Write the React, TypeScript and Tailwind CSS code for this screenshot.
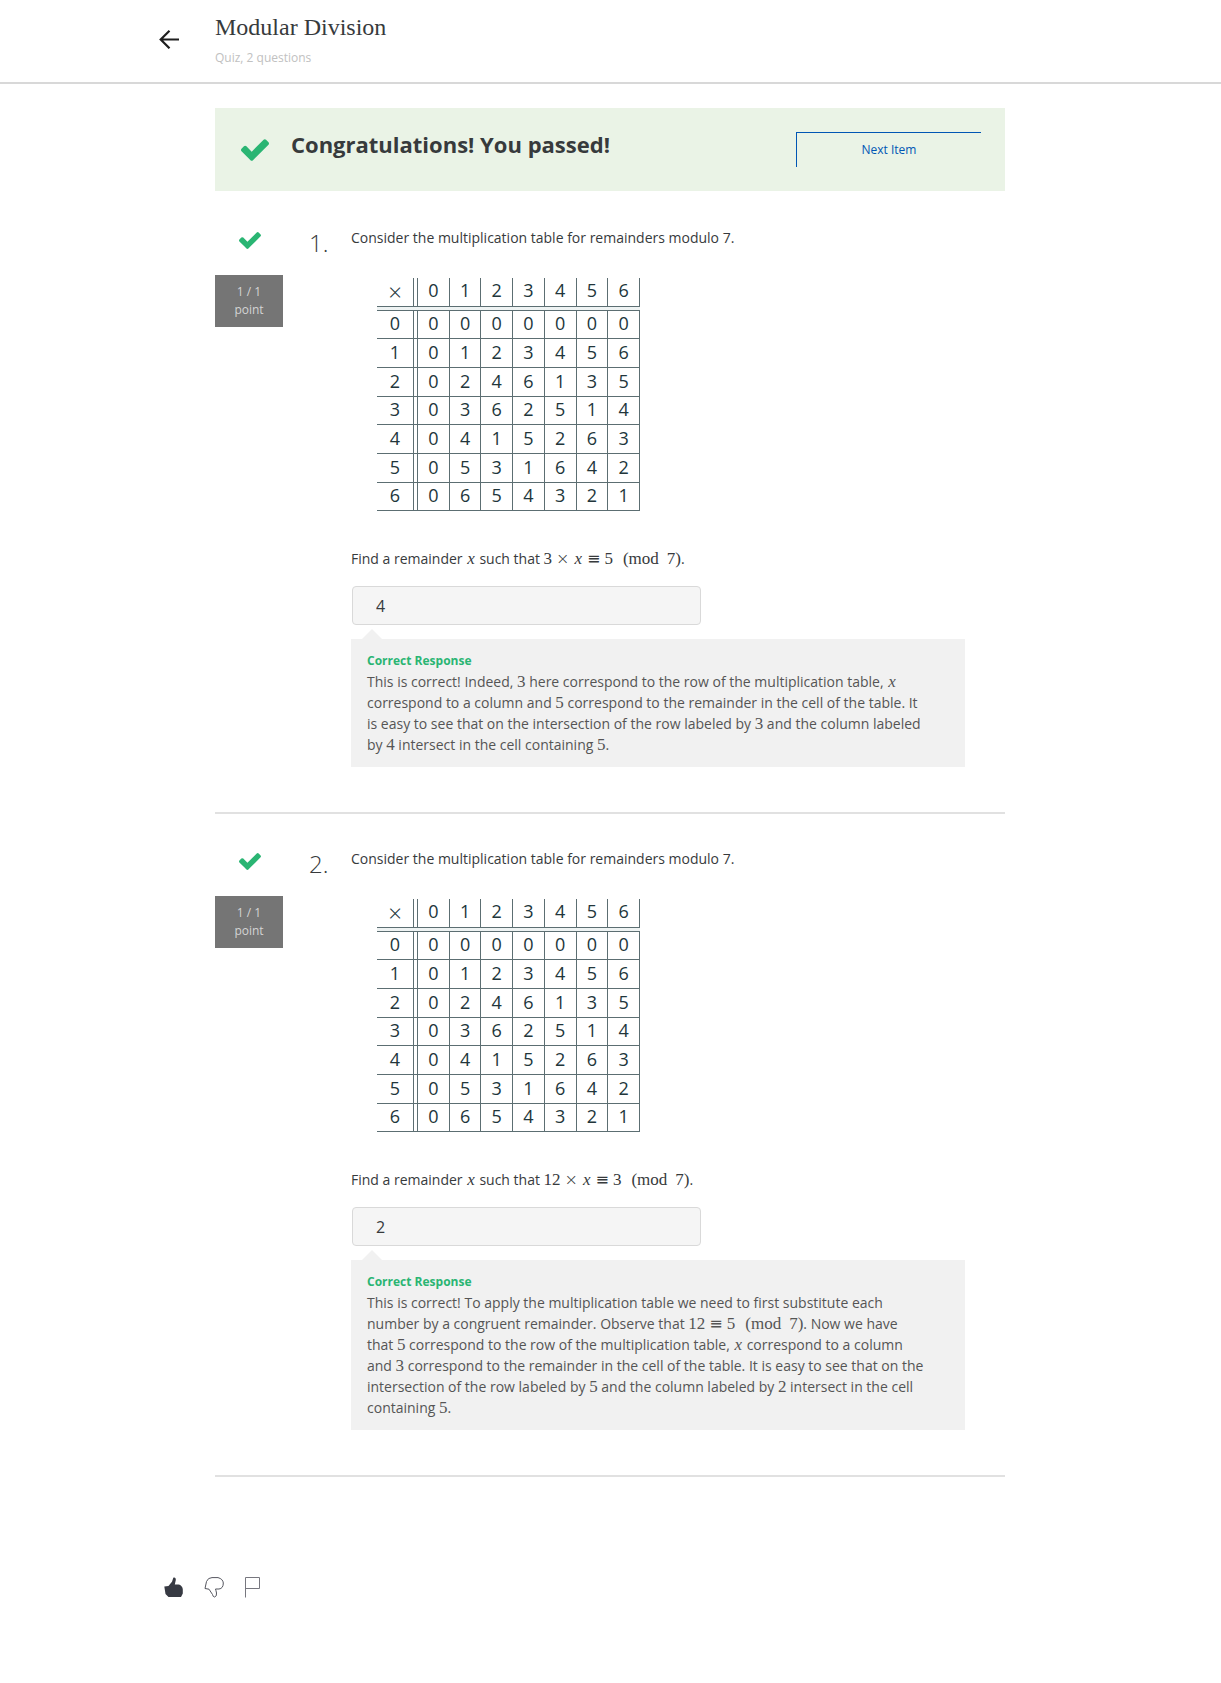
import React, { useState } from "react";

const DIGITS = [0, 1, 2, 3, 4, 5, 6];

function Check({ className }: { className: string }) {
  return (
    <svg viewBox="121 334 1550 1188" className={className} fill="#2ab573" aria-hidden="true">
      <path d="M1671 566q0 40-28 68l-724 724-136 136q-28 28-68 28t-68-28l-136-136-362-362q-28-28-28-68t28-68l136-136q28-28 68-28t68 28l294 295 656-657q28-28 68-28t68 28l136 136q28 28 28 68z" />
    </svg>
  );
}

function M({ children }: { children: React.ReactNode }) {
  return (
    <span className="font-['Liberation_Serif',serif] text-[17px] leading-none whitespace-nowrap">
      {children}
    </span>
  );
}

function X() {
  return <i className="px-px font-['Liberation_Serif',serif] text-[17px] leading-none">x</i>;
}

function Times() {
  return <span className="mx-1 font-['DejaVu_Sans',sans-serif] text-[16px] leading-none font-extralight">×</span>;
}

function Equiv() {
  return <span className="mx-1 font-['DejaVu_Sans',sans-serif] text-[16px] leading-none font-normal">≡</span>;
}

function Mod() {
  return (
    <>
      <span className="ml-2.5">(</span>mod<span className="ml-2">7)</span>
    </>
  );
}

function MultiplicationTable() {
  return (
    <table
      aria-label="Multiplication table modulo 7"
      className="ml-[26px] w-[263px] table-fixed border-separate border-spacing-0 text-center text-[18px] leading-[24px] text-[#22363b]"
    >
      <colgroup>
        <col className="w-[37px]" />
        <col className="w-1" />
        {DIGITS.map((d) => (
          <col key={d} />
        ))}
      </colgroup>
      <thead>
        <tr className="h-[29px]">
          <th className="border-r border-b border-[#5c6e72] p-0 text-[24px] font-light">×</th>
          <td className="border-r border-b border-[#5c6e72] p-0" />
          {DIGITS.map((d) => (
            <th key={d} className="border-r border-b border-[#5c6e72] p-0 pb-1 font-normal">
              {d}
            </th>
          ))}
        </tr>
        <tr className="h-1">
          <td colSpan={9} className="border-b border-[#5c6e72] bg-[#eef3f3] p-0" />
        </tr>
      </thead>
      <tbody>
        {DIGITS.map((r) => (
          <tr key={r} className={r % 3 === 0 ? "h-7" : "h-[29px]"}>
            <th className="border-r border-b border-[#5c6e72] p-0 pb-[3px] font-normal">{r}</th>
            <td className="border-r border-b border-[#5c6e72] p-0" />
            {DIGITS.map((c) => (
              <td key={c} className="border-r border-b border-[#5c6e72] p-0 pb-[3px]">
                {(r * c) % 7}
              </td>
            ))}
          </tr>
        ))}
      </tbody>
    </table>
  );
}

type QuestionProps = {
  number: number;
  answer: string;
  prompt: React.ReactNode;
  children: React.ReactNode;
};

function Question({ number, answer, prompt, children }: QuestionProps) {
  const [value, setValue] = useState(answer);
  const id = `answer-${number}`;
  return (
    <section className="flex border-b-2 border-[#e1e1e1] pb-[45px]">
      <div className="w-[68px] shrink-0 pt-[39px]">
        <Check className="ml-6 h-[17px] w-[22px]" />
        <div className="mt-[26px] bg-[#757575] py-2 text-center text-xs leading-[18px] text-[#d4d4d4]">
          1 / 1<br />
          point
        </div>
      </div>
      <div className="w-[68px] shrink-0 pt-[34px] pl-[26px] text-[24px] leading-[32px] font-light text-[#373a3c]">
        {number}.
      </div>
      <div className="min-w-0 flex-1 pt-[35px] pr-10">
        <p className="text-sm leading-5">Consider the multiplication table for remainders modulo 7.</p>
        <div className="mt-[30px]">
          <MultiplicationTable />
        </div>
        <p className="mt-[37px] text-sm leading-[21px]">
          <label htmlFor={id}>{prompt}</label>
        </p>
        <input
          id={id}
          type="text"
          value={value}
          onChange={(e) => setValue(e.target.value)}
          className="mt-[17px] ml-px block h-[39px] w-[349px] rounded border border-[#d9d9d9] bg-[#f5f5f5] px-[23px] text-base"
        />
        <svg viewBox="0 0 20 10" className="mt-1 ml-[11px] h-[10px] w-5" fill="#f1f1f1" aria-hidden="true">
          <path d="M0 10 10 0l10 10z" />
        </svg>
        <div className="bg-[#f1f1f1] py-3 pr-10 pl-4">
          <h3 className="text-xs leading-5 font-bold text-[#2ab573]">Correct Response</h3>
          <p className="text-sm leading-[21px] text-[#555]">{children}</p>
        </div>
      </div>
    </section>
  );
}

export default function App() {
  return (
    <div className="min-h-screen bg-white pb-[85px] font-['Open_Sans',sans-serif] text-[#373a3c]">
      <header className="border-b-2 border-[#d8d8d8]">
        <div className="mx-auto flex h-[82px] max-w-[903px]">
          <button type="button" aria-label="Back" className="mt-[29px] h-5 w-5">
            <svg viewBox="0 0 20 20" className="h-5 w-5" fill="none" stroke="#1f1f1f" strokeWidth="2.2">
              <path d="M20 10.500H2M10.500 1.700 1.700 10.500l8.800 8.800" />
            </svg>
          </button>
          <div className="ml-9 pt-[13px]">
            <h1 className="font-['Liberation_Serif',serif] text-[24px] leading-[28px]">Modular Division</h1>
            <p className="mt-2 text-xs leading-[18px] text-[#c1c1c1]">Quiz, 2 questions</p>
          </div>
        </div>
      </header>

      <main className="mx-auto max-w-[791px] pr-px">
        <div className="mt-6 mb-0.5 flex h-[83px] items-start bg-[#eaf3e6] pr-6 pl-[26px]">
          <Check className="mt-[31px] h-[22px] w-7" />
          <h2 className="mt-[21px] ml-[22px] flex-1 text-[22px] leading-[30px] font-bold">
            Congratulations! You passed!
          </h2>
          <button
            type="button"
            className="mt-6 h-[35px] w-[185px] border-t border-l border-[#0156b4] text-xs text-[#0156b4]"
          >
            Next Item
          </button>
        </div>

        <Question
          number={1}
          answer="4"
          prompt={
            <>
              Find a remainder <X /> such that{" "}
              <M>
                3<Times />
                <X />
                <Equiv />5<Mod />
              </M>
              .
            </>
          }
        >
          This is correct! Indeed, <M>3</M> here correspond to the row of the multiplication table, <X /> correspond
          to a column and <M>5</M> correspond to the remainder in the cell of the table. It is easy to see that on the
          intersection of the row labeled by <M>3</M> and the column labeled by <M>4</M> intersect in the cell
          containing <M>5</M>.
        </Question>

        <Question
          number={2}
          answer="2"
          prompt={
            <>
              Find a remainder <X /> such that{" "}
              <M>
                12
                <Times />
                <X />
                <Equiv />3<Mod />
              </M>
              .
            </>
          }
        >
          This is correct! To apply the multiplication table we need to first substitute each number by a congruent
          remainder. Observe that{" "}
          <M>
            12
            <Equiv />5<Mod />
          </M>
          . Now we have that <M>5</M> correspond to the row of the multiplication table, <X /> correspond to a column
          and <M>3</M> correspond to the remainder in the cell of the table. It is easy to see that on the
          intersection of the row labeled by <M>5</M> and the column labeled by <M>2</M> intersect in the cell
          containing <M>5</M>.
        </Question>
      </main>

      <footer className="mx-auto mt-[100px] flex max-w-[903px] pl-[5px]">
        <button type="button" aria-label="Like" className="h-[21px] w-5">
          <svg viewBox="0 0 20 21" className="h-[21px] w-5" fill="#373a43">
            <path d="M9.3.8C10.800 0 12 1.100 11.800 3L10.800 7.500H13.500C16.500 7.500 18.800 9.600 18.800 12.500V16.500L17 20H4.500L1.500 17 .3 9.500 4.500 9 6.500 6.500 8 4.800Z" />
          </svg>
        </button>
        <button type="button" aria-label="Dislike" className="ml-5 h-[21px] w-5">
          <svg viewBox="0 0 20 21" className="h-[21px] w-5" fill="none" stroke="#55565f">
            <path d="M1 11.500 2.500 4.500Q4 .6 8 .6H14Q19 2 19.300 6Q19.300 11.500 15 12H11.500Q12 13.500 12.500 16Q13 19.500 10.500 20Q9 20 8.500 17.500L5 12.200Z" />
          </svg>
        </button>
        <button type="button" aria-label="Flag" className="ml-5 h-[21px] w-4">
          <svg viewBox="0 0 16 21" className="h-[21px] w-4" fill="none" stroke="#77777f">
            <path d="M1.500 20.500V.5H15.500V11.500H1.500" />
          </svg>
        </button>
      </footer>
    </div>
  );
}
